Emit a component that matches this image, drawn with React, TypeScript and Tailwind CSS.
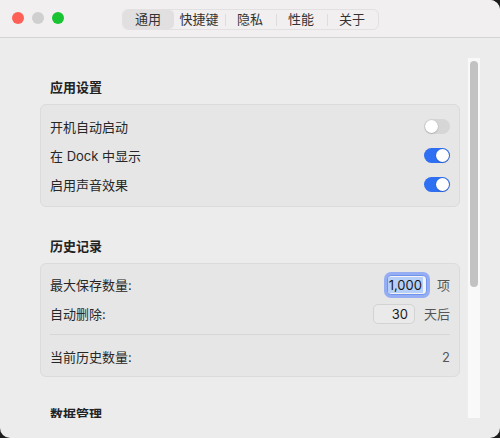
import React from "react";

const font = { fontFamily: '"Inter", "Noto Sans CJK SC", sans-serif' };

function Toggle({ on }: { on: boolean }) {
  return (
    <div
      className={`relative w-[26px] h-[15px] rounded-full ${on ? "bg-[#2f6ff2]" : "bg-[#d6d6d6]"}`}
    >
      <div
        className={`absolute top-[1px] w-[13px] h-[13px] rounded-full bg-white shadow-[0_0.5px_1.5px_rgba(0,0,0,0.3)] ${on ? "right-[1px]" : "left-[1px]"}`}
      />
    </div>
  );
}

function SectionTitle({ children }: { children: React.ReactNode }) {
  return (
    <div className="h-[16px] leading-[16px] pl-[10px] mb-[9px] text-[13px] font-semibold text-[#222]">
      {children}
    </div>
  );
}

function Row({ label, children }: { label: string; children?: React.ReactNode }) {
  return (
    <div className="h-[29px] flex items-center justify-between">
      <span className="text-[13px] leading-[16px] text-[#262626]">{label}</span>
      <div className="flex items-center">{children}</div>
    </div>
  );
}

const tabs = ["通用", "快捷键", "隐私", "性能", "关于"];

export default function App() {
  return (
    <div className="w-[500px] h-[438px] bg-[#1c1c1c]" style={font}>
      <div className="w-full h-full rounded-[10px] rounded-tl-none bg-[#ececec] overflow-hidden flex flex-col">
        {/* title bar */}
        <div className="relative h-[38px] shrink-0 bg-[#f1efef] border-b border-[#d5d3d3] flex items-center justify-center">
          <div className="absolute left-[12px] top-[12px] flex gap-[8px]">
            <div className="w-[12px] h-[12px] rounded-full bg-[#fe5f57]" />
            <div className="w-[12px] h-[12px] rounded-full bg-[#d0cfcf]" />
            <div className="w-[12px] h-[12px] rounded-full bg-[#19c332]" />
          </div>
          <div className="mt-[1px] flex h-[21px] border border-[#e2e0e0] rounded-[6px] bg-[#f1efef]">
            {tabs.map((t, i) => (
              <div key={t} className="relative w-[51px] h-full flex items-center justify-center">
                {i === 0 && <div className="absolute inset-0 rounded-[5px] bg-[#e1dfdf]" />}
                {i >= 2 && (
                  <div className="absolute left-0 top-[4px] h-[12px] w-px bg-[#dedcdc]" />
                )}
                <span className="relative text-[13px] leading-[16px] text-[#333]">{t}</span>
              </div>
            ))}
          </div>
        </div>

        {/* content */}
        <div className="flex-1 min-h-0 px-[20px] py-[20px] flex">
          <div className="flex-1 min-h-0 overflow-hidden pl-[20px] pr-[7px] pt-[21px]">
            <SectionTitle>应用设置</SectionTitle>
            <div className="rounded-[6px] border border-[#dbdbdb] bg-[#e6e6e6] px-[9px] py-[7px]">
              <Row label="开机自动启动">
                <Toggle on={false} />
              </Row>
              <Row label="在 Dock 中显示">
                <Toggle on={true} />
              </Row>
              <Row label="启用声音效果">
                <Toggle on={true} />
              </Row>
            </div>

            <div className="mt-[31px]">
              <SectionTitle>历史记录</SectionTitle>
            </div>
            <div className="rounded-[6px] border border-[#dbdbdb] bg-[#e6e6e6] px-[9px] pt-[6px] pb-[5px]">
              <Row label="最大保存数量:">
                <div className="w-[40px] h-[20px] rounded-[4px] border border-[#6f93ef] ring-[3px] ring-[#94adf3] bg-[#f2f2f2] flex items-center justify-end pr-[3px]">
                  <span className="bg-[#b5cff9] text-[13px] leading-[16px] text-[#1a1a1a] px-[1px]">1,000</span>
                </div>
                <span className="ml-[10px] text-[13px] leading-[16px] text-[#555]">项</span>
              </Row>
              <Row label="自动删除:">
                <div className="w-[42px] h-[20px] rounded-[5px] border border-[#d3d3d3] bg-[#eaeaea] flex items-center justify-end pr-[6px]">
                  <span className="text-[13px] leading-[16px] text-[#1a1a1a]">30</span>
                </div>
                <span className="ml-[9px] text-[13px] leading-[16px] text-[#555]">天后</span>
              </Row>
              <div className="mt-[6px] h-px bg-[#d7d7d7]" />
              <div className="mt-[8px] h-[28px] flex items-center justify-between">
                <span className="text-[13px] leading-[16px] text-[#262626]">当前历史数量:</span>
                <span className="text-[13px] leading-[16px] text-[#555]">2</span>
              </div>
            </div>

            <div className="mt-[29px]">
              <SectionTitle>数据管理</SectionTitle>
            </div>
            <div className="rounded-[6px] border border-[#dbdbdb] bg-[#e6e6e6] h-[120px]" />
          </div>

          {/* scrollbar */}
          <div className="w-[13px] bg-[#f9f9f9] border-l border-[#ededed] pt-[3px] pl-[2px]">
            <div className="w-[8px] h-[226px] rounded-full bg-[#c2c2c2]" />
          </div>
        </div>
      </div>
    </div>
  );
}
